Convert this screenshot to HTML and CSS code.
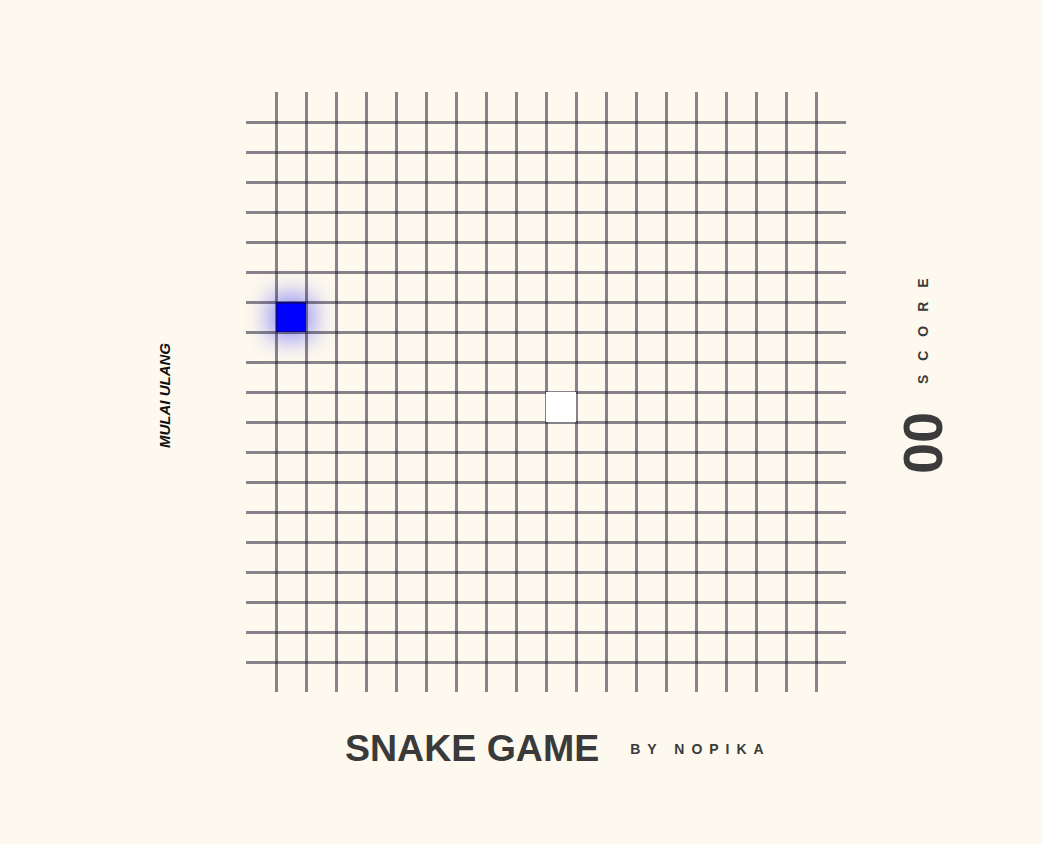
FILE: index.html
```html
<!DOCTYPE html>
<html lang="id">
<head>
    <meta charset="UTF-8">
    <meta name="viewport" content="width=device-width, initial-scale=1.0">
    <title>Snake Game</title>
    <link rel="stylesheet" href="styles.css">
</head>
<body>
    <div class="game">
        <div class="arena">
            <button class="restart" id="restart">MULAI ULANG</button>

            <!-- Papan permainan 20x20 -->
            <div class="board" id="board">
                <div class="snake"></div>
                <div class="food"></div>
            </div>

            <div class="score">
                <span class="score-value" id="score">00</span>
                <span class="score-label">SCORE</span>
            </div>
        </div>

        <div class="title">
            <h1>SNAKE GAME</h1>
            <span class="by">BY NOPIKA</span>
        </div>
    </div>
</body>
</html>
```

FILE: styles.css
```css
body {
    margin: 0;
    background-color: #fdf9ee;
    color: #3b3b3b;
    font-family: "Liberation Sans", Arial, sans-serif;
}
.game {
    padding-top: 92px;
}
.arena {
    display: flex;
    align-items: center;
}
/* Tombol mulai ulang, dibaca dari bawah ke atas */
.restart {
    margin-left: 156px;
    margin-top: 6px;
    padding: 0;
    border: none;
    background: none;
    color: #111;
    font-family: "Liberation Sans", Arial, sans-serif;
    font-size: 15px;
    font-weight: bold;
    font-style: italic;
    line-height: 17px;
    writing-mode: vertical-rl;
    transform: rotate(180deg);
    cursor: pointer;
}
.board {
    position: relative;
    margin-left: 73px;
    display: grid;
    grid-template-columns: repeat(20, 30px);
    grid-template-rows: repeat(20, 30px);
    width: 600px;
    height: 600px;
}
.board::before,
.board::after {
    content: '';
    position: absolute;
    pointer-events: none;
    z-index: 1;
}
/* garis vertikal */
.board::before {
    top: 0;
    bottom: 0;
    left: 28.5px;
    width: 543px;
    background: repeating-linear-gradient(to right, rgba(20, 15, 40, 0.5) 0 3px, transparent 3px 30px);
}
/* garis horizontal */
.board::after {
    left: 0;
    right: 0;
    top: 28.5px;
    height: 543px;
    background: repeating-linear-gradient(to bottom, rgba(20, 15, 40, 0.5) 0 3px, transparent 3px 30px);
}
.snake {
    grid-column: 2;
    grid-row: 8;
    background-color: #0000ff;
    box-shadow: 0 0 24px 6px rgba(0, 0, 255, 0.45);
}
.food {
    position: relative;
    z-index: 2;
    grid-column: 11;
    grid-row: 11;
    background-color: #fff;
}
.score {
    margin-left: 49px;
    margin-bottom: 46px;
    display: flex;
    align-items: center;
    gap: 28px;
    writing-mode: vertical-rl;
    transform: rotate(180deg);
}
.score-value {
    font-size: 56px;
    font-weight: bold;
    line-height: 1;
}
.score-label {
    font-size: 14px;
    font-weight: bold;
    letter-spacing: 14px;
    line-height: 1;
}
.title {
    display: flex;
    align-items: center;
    padding-left: 345px;
    margin-top: 38px;
}
.title h1 {
    margin: 0;
    font-size: 37.5px;
    line-height: 1;
    color: #3a3a3a;
}
.by {
    margin-left: 31px;
    font-size: 14px;
    font-weight: bold;
    letter-spacing: 7px;
}
```
